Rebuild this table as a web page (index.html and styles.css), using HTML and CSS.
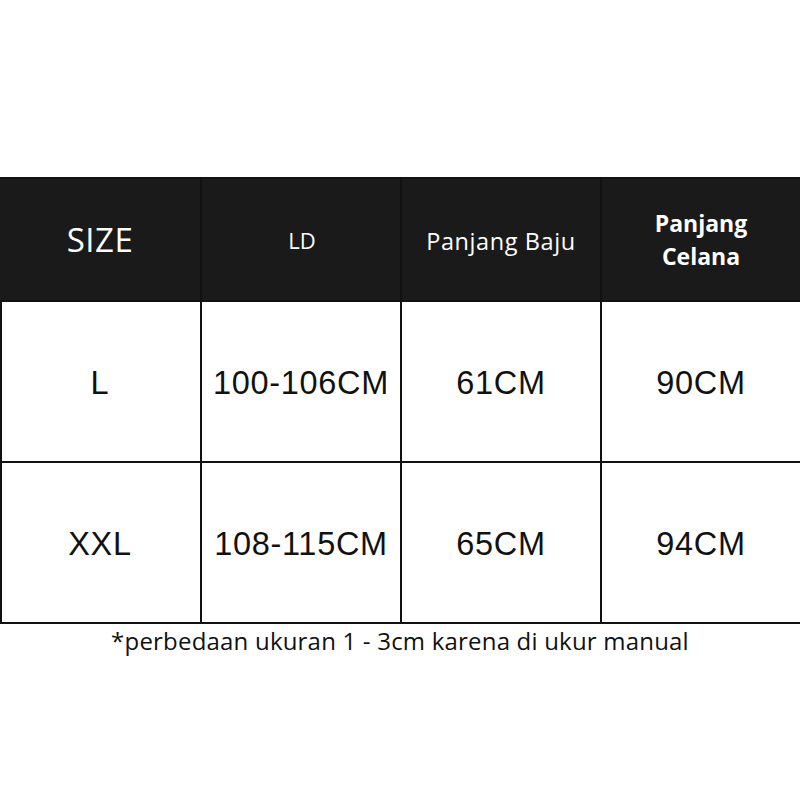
FILE: index.html
```html
<!DOCTYPE html>
<html>
<head>
<meta charset="utf-8">
<link rel="stylesheet" href="styles.css">
</head>
<body>
<div class="page">
  <div class="chart">
    <div class="cell head size">SIZE</div>
    <div class="cell head small">LD</div>
    <div class="cell head mid">Panjang Baju</div>
    <div class="cell head bold">Panjang<br>Celana</div>

    <div class="cell body">L</div>
    <div class="cell body">100-106CM</div>
    <div class="cell body">61CM</div>
    <div class="cell body">90CM</div>

    <div class="cell body">XXL</div>
    <div class="cell body">108-115CM</div>
    <div class="cell body">65CM</div>
    <div class="cell body">94CM</div>
  </div>
  <p class="note">*perbedaan ukuran 1 - 3cm karena di ukur manual</p>
</div>
</body>
</html>
```
FILE: styles.css
```css
html, body {
  margin: 0;
  padding: 0;
  background: #fff;
}
.page {
  width: 800px;
  padding-top: 177px;
  display: flex;
  flex-direction: column;
  align-items: center;
}
.chart {
  width: 800px;
  box-sizing: border-box;
  display: grid;
  grid-template-columns: 200px 200px 200px 200px;
  grid-template-rows: 123px 161px 161px;
  border-top: 2px solid #111;
  border-left: 2px solid #111;
}
.cell {
  display: flex;
  align-items: center;
  justify-content: center;
  text-align: center;
  border-right: 2px solid #111;
  border-bottom: 2px solid #111;
  box-sizing: border-box;
}
.chart .cell:nth-child(4n+1) {
  margin-left: -2px;
  width: 202px;
}
.head {
  background: #1a1a1a;
  color: #fff;
  font-family: "Open Sans", sans-serif;
}
.size {
  font-size: 33px;
  letter-spacing: 0.5px;
}
.small {
  font-size: 22px;
  padding-left: 2px;
}
.mid {
  font-size: 23.5px;
  letter-spacing: 0.6px;
  padding-top: 2px;
}
.bold {
  font-weight: 700;
  font-size: 23px;
  line-height: 33px;
  padding-top: 1px;
}
.body {
  color: #111;
  font-family: "Liberation Sans", Arial, sans-serif;
  font-size: 32.5px;
  letter-spacing: 0.7px;
  padding-top: 4px;
}
.note {
  margin: 0;
  padding-top: 0;
  font-family: "Open Sans", sans-serif;
  font-size: 24px;
  letter-spacing: 0.2px;
  color: #111;
}
```
